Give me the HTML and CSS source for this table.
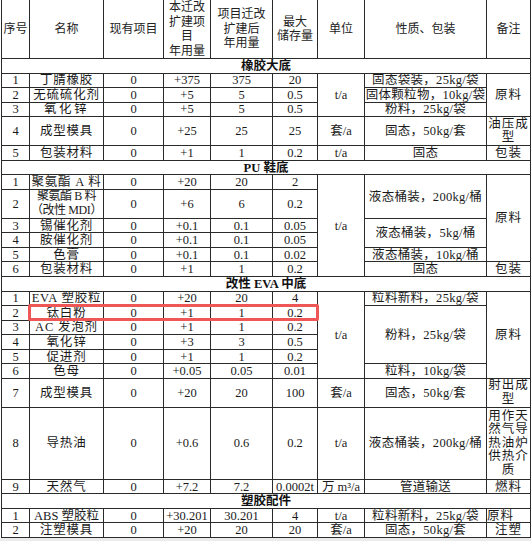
FILE: index.html
```html
<!DOCTYPE html>
<html lang="zh-CN">
<head>
<meta charset="utf-8">
<title>原辅材料表</title>
<link rel="stylesheet" href="styles.css">
</head>
<body>
<div class="page">
<table class="tbl">
<colgroup>
<col class="c1"><col class="c2"><col class="c3"><col class="c4"><col class="c5"><col class="c6"><col class="c7"><col class="c8"><col class="c9">
</colgroup>
<thead>
<tr class="hd">
<th>序号</th><th>名称</th><th>现有项目</th><th>本迁改<br>扩建项<br>目<br>年用量</th><th>项目迁改<br>扩建后<br>年用量</th><th>最大<br>储存量</th><th>单位</th><th>性质、包装</th><th>备注</th>
</tr>
</thead>
<tbody>
<tr class="s"><td colspan="9" class="sec">橡胶大底</td></tr>
<tr class="s"><td>1</td><td class="nm">丁腈橡胶</td><td>0</td><td>+375</td><td>375</td><td>20</td><td rowspan="3">t/a</td><td class="pk">固态袋装，25kg/袋</td><td rowspan="3" class="bz">原料</td></tr>
<tr class="s"><td>2</td><td class="nm">无硫硫化剂</td><td>0</td><td>+5</td><td>5</td><td>0.5</td><td class="pk">固体颗粒物，10kg/袋</td></tr>
<tr class="s"><td>3</td><td class="nm wide">氧化锌</td><td>0</td><td>+5</td><td>5</td><td>0.5</td><td class="pk">粉料，25kg/袋</td></tr>
<tr class="d"><td>4</td><td class="nm">成型模具</td><td>0</td><td>+25</td><td>25</td><td>25</td><td>套/a</td><td class="pk">固态，50kg/套</td><td class="bz two">油压成型</td></tr>
<tr class="s"><td>5</td><td class="nm">包装材料</td><td>0</td><td>+1</td><td>1</td><td>0.2</td><td>t/a</td><td class="pk">固态</td><td class="bz">包装</td></tr>

<tr class="s"><td colspan="9" class="sec">PU 鞋底</td></tr>
<tr class="s"><td>1</td><td class="nm">聚氨酯 A 料</td><td>0</td><td>+20</td><td>20</td><td>2</td><td rowspan="6">t/a</td><td rowspan="2" class="pk">液态桶装，200kg/桶</td><td rowspan="5" class="bz">原料</td></tr>
<tr class="d"><td>2</td><td class="nm two mdi">聚氨酯 B 料<br>（改性 MDI）</td><td>0</td><td>+6</td><td>6</td><td>0.2</td></tr>
<tr class="s"><td>3</td><td class="nm">锡催化剂</td><td>0</td><td>+0.1</td><td>0.1</td><td>0.05</td><td rowspan="2" class="pk">液态桶装，5kg/桶</td></tr>
<tr class="s"><td>4</td><td class="nm">胺催化剂</td><td>0</td><td>+0.1</td><td>0.1</td><td>0.05</td></tr>
<tr class="s"><td>5</td><td class="nm">色膏</td><td>0</td><td>+0.1</td><td>0.1</td><td>0.02</td><td class="pk">液态桶装，10kg/桶</td></tr>
<tr class="s"><td>6</td><td class="nm">包装材料</td><td>0</td><td>+1</td><td>1</td><td>0.2</td><td class="pk">固态</td><td class="bz">包装</td></tr>

<tr class="s"><td colspan="9" class="sec">改性 EVA 中底</td></tr>
<tr class="s"><td>1</td><td class="nm">EVA 塑胶粒</td><td>0</td><td>+20</td><td>20</td><td>4</td><td rowspan="6">t/a</td><td class="pk">粒料新料，25kg/袋</td><td rowspan="6" class="bz">原料</td></tr>
<tr class="s"><td>2</td><td class="nm">钛白粉</td><td>0</td><td>+1</td><td>1</td><td>0.2</td><td rowspan="4" class="pk">粉料，25kg/袋</td></tr>
<tr class="s"><td>3</td><td class="nm">AC 发泡剂</td><td>0</td><td>+1</td><td>1</td><td>0.2</td></tr>
<tr class="s"><td>4</td><td class="nm">氧化锌</td><td>0</td><td>+3</td><td>3</td><td>0.5</td></tr>
<tr class="s"><td>5</td><td class="nm">促进剂</td><td>0</td><td>+1</td><td>1</td><td>0.2</td></tr>
<tr class="s"><td>6</td><td class="nm">色母</td><td>0</td><td>+0.05</td><td>0.05</td><td>0.01</td><td class="pk">粒料，10kg/袋</td></tr>
<tr class="d"><td>7</td><td class="nm">成型模具</td><td>0</td><td>+20</td><td>20</td><td>100</td><td>套/a</td><td class="pk">固态，50kg/套</td><td class="bz two">射出成型</td></tr>
<tr class="big"><td>8</td><td class="nm">导热油</td><td>0</td><td>+0.6</td><td>0.6</td><td>0.2</td><td>t/a</td><td class="pk">液态桶装，200kg/桶</td><td class="bz tall">用作天然气导热油炉供热介质</td></tr>
<tr class="s"><td>9</td><td class="nm">天然气</td><td>0</td><td>+7.2</td><td>7.2</td><td class="tight">0.0002t</td><td class="tight">万 m³/a</td><td class="pk">管道输送</td><td class="bz">燃料</td></tr>

<tr class="s"><td colspan="9" class="sec">塑胶配件</td></tr>
<tr class="s"><td>1</td><td class="nm tight">ABS 塑胶粒</td><td>0</td><td class="tight">+30.201</td><td>30.201</td><td>4</td><td>t/a</td><td class="pk">粒料新料，25kg/袋</td><td class="bz left">原料</td></tr>
<tr class="s"><td>2</td><td class="nm">注塑模具</td><td>0</td><td>+20</td><td>20</td><td>20</td><td>套/a</td><td class="pk">固态，50kg/套</td><td class="bz">注塑</td></tr>
</tbody>
</table>
<div class="mark"></div>
</div>
</body>
</html>
```

FILE: styles.css
```css
html, body {
  margin: 0;
  padding: 0;
}
body {
  background: #ebebeb;
  min-height: 541px;
}
.page {
  position: relative;
  background: #ffffff;
  width: 531px;
  padding-left: 1px;
  box-sizing: border-box;
}
.tbl {
  border-collapse: collapse;
  table-layout: fixed;
  width: 530px;
  font-family: "Liberation Serif", "Noto Sans CJK SC", serif;
  font-size: 12.5px;
  color: #1a1a1a;
}
.c1 { width: 28px; }
.c2 { width: 74px; }
.c3 { width: 60px; }
.c4 { width: 47px; }
.c5 { width: 62px; }
.c6 { width: 45px; }
.c7 { width: 47px; }
.c8 { width: 122px; }
.c9 { width: 44px; }

.tbl th,
.tbl td {
  border: 1px solid #2a2a2a;
  padding: 0;
  text-align: center;
  vertical-align: middle;
  line-height: 10px;
  overflow: hidden;
  white-space: normal;
}
.tbl th {
  border-top: none;
  font-family: "Liberation Sans", "Noto Sans CJK SC", sans-serif;
  font-weight: normal;
  font-size: 12px;
  line-height: 14.5px;
  color: #222;
}
.hd { height: 58px; }
.s { height: 14.55px; }
.d { height: 29px; }
.big { height: 72px; }

.tbl .sec {
  font-weight: bold;
  color: #111;
}
.tbl .nm {
  letter-spacing: 0.8px;
  white-space: nowrap;
}
.tbl .nm.wide { letter-spacing: 2.5px; }
.tbl .two { line-height: 13.5px; }
.tbl .mdi { letter-spacing: -0.4px; font-size: 12px; }
.tbl .pk {
  letter-spacing: 0.3px;
  white-space: nowrap;
}
.tbl .bz {
  letter-spacing: 1px;
}
.tbl .tall { line-height: 13.5px; }
.tbl .tight { letter-spacing: 0; white-space: nowrap; }
.tbl .left { text-align: left; }

.mark {
  position: absolute;
  left: 28px;
  top: 304px;
  width: 291px;
  height: 17px;
  box-sizing: border-box;
  border: 3px solid #ef5656;
  border-radius: 2px;
}
```
